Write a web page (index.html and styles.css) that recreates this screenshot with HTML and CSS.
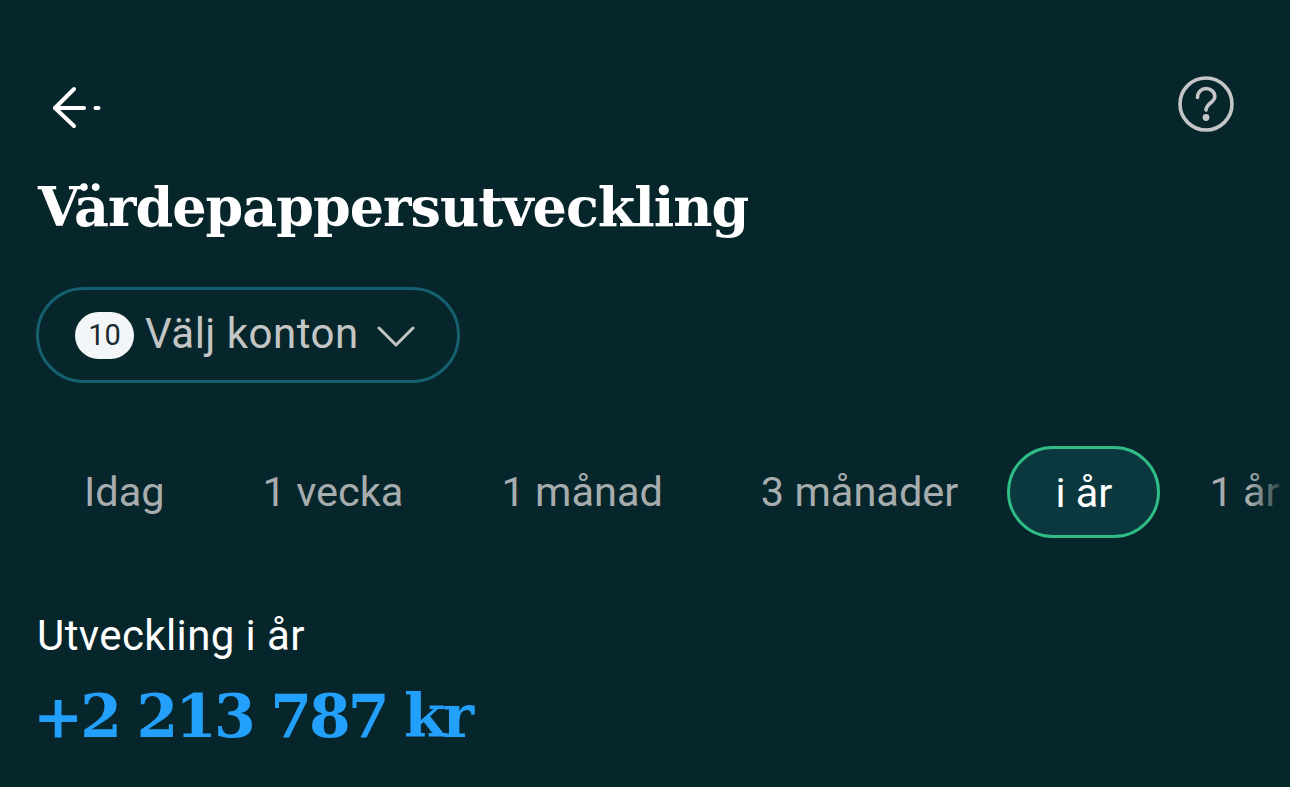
FILE: index.html
```html
<!DOCTYPE html>
<html>
<head>
	<title>Värdepappersutveckling</title>
	<link rel="stylesheet" href="styles.css">
</head>
<body>
	<div class="top-bar">
		<button class="icon-btn back-btn" aria-label="Tillbaka">
			<svg width="52" height="48" viewBox="0 0 52 48" fill="none" stroke="#fff" stroke-width="4" stroke-linecap="round" stroke-linejoin="round">
				<path d="M24 5 L5 24 L24 42"/>
				<path d="M5 24 H34"/>
				<path d="M45.5 24 H48.5"/>
			</svg>
		</button>
		<button class="icon-btn help-btn" aria-label="Hjälp">
			<svg width="56" height="56" viewBox="0 0 56 56" fill="none" stroke="#c4c6c6" stroke-width="3.6" stroke-linecap="round">
				<circle cx="28" cy="28" r="26"/>
				<path d="M19.5 21.5 C19.5 16 23.5 12.5 28 12.5 C33 12.5 36.8 16 36.8 20.5 C36.8 26.5 28.5 27 28 34"/>
				<circle cx="28" cy="41.5" r="1.6" fill="#c4c6c6"/>
			</svg>
		</button>
	</div>

	<h1 class="page-title">Värdepappersutveckling</h1>

	<button class="account-select">
		<span class="account-count">10</span>
		<span class="account-label">Välj konton</span>
		<svg class="chevron" width="38" height="22" viewBox="0 0 38 22" fill="none" stroke="#c4c6c6" stroke-width="3" stroke-linecap="round" stroke-linejoin="round">
			<path d="M2 3 L19 20 L36 3"/>
		</svg>
	</button>

	<div class="period-tabs">
		<span class="period-tab">Idag</span>
		<span class="period-tab">1 vecka</span>
		<span class="period-tab">1 månad</span>
		<span class="period-tab">3 månader</span>
		<span class="period-tab active">i år</span>
		<span class="period-tab">1 år</span>
	</div>

	<div class="summary">
		<div class="summary-label">Utveckling i år</div>
		<div class="summary-value">+2 213 787 kr</div>
	</div>
</body>
</html>
```

FILE: styles.css
```css
html, body {
	height: 100%;
}

body {
	margin: 0;
	background-color: #07262b;
	color: #fff;
	font-family: Roboto, sans-serif;
	overflow: hidden;
}

button {
	background: none;
	border: none;
	padding: 0;
	color: inherit;
	font: inherit;
}

.top-bar {
	display: flex;
	justify-content: space-between;
	align-items: center;
	padding: 76px 56px 0 50px;
}

.icon-btn {
	display: flex;
}

.back-btn {
	margin-top: 7px;
}

.page-title {
	margin: 40px 0 0 38px;
	font-family: "DejaVu Serif", serif;
	font-size: 54px;
	line-height: 70px;
	font-weight: 700;
	letter-spacing: -1px;
}

.account-select {
	display: flex;
	align-items: center;
	box-sizing: border-box;
	width: 424px;
	height: 96px;
	margin: 45px 0 0 36px;
	padding: 0 40px 0 36px;
	border: 3px solid #14606f;
	border-radius: 48px;
	color: #c4c6c6;
}

.account-count {
	width: 59px;
	height: 47px;
	border-radius: 24px;
	background-color: #f3f6f8;
	color: #1b2a2e;
	font-size: 29px;
	line-height: 47px;
	text-align: center;
}

.account-label {
	margin: 0 0 4px 11px;
	font-size: 42px;
	letter-spacing: 0.5px;
}

.chevron {
	margin: 2px 0 0 18px;
}

.period-tabs {
	position: relative;
	display: flex;
	align-items: center;
	height: 92px;
	margin-top: 63px;
	padding-left: 35px;
	white-space: nowrap;
}

.period-tabs::after {
	content: "";
	position: absolute;
	top: 0;
	right: 0;
	bottom: 0;
	width: 40px;
	background: linear-gradient(to right, rgba(7, 38, 43, 0), #07262b);
}

.period-tab {
	flex-shrink: 0;
	padding: 0 49px;
	color: #a7adae;
	font-size: 41.5px;
	line-height: 88px;
}

.period-tab.active {
	box-sizing: border-box;
	width: 153px;
	height: 92px;
	padding: 0;
	border: 3px solid #2fbd85;
	border-radius: 46px;
	background-color: #0a383e;
	color: #fff;
	text-align: center;
}

.summary {
	margin: 72px 0 0 37px;
}

.summary-label {
	font-size: 42px;
	letter-spacing: 0.4px;
	line-height: 52px;
}

.summary-value {
	margin: 16px 0 0 -4px;
	color: #22a0fb;
	font-family: "DejaVu Serif", serif;
	font-size: 60px;
	line-height: 76px;
	font-weight: 700;
	letter-spacing: -3.1px;
}
```
